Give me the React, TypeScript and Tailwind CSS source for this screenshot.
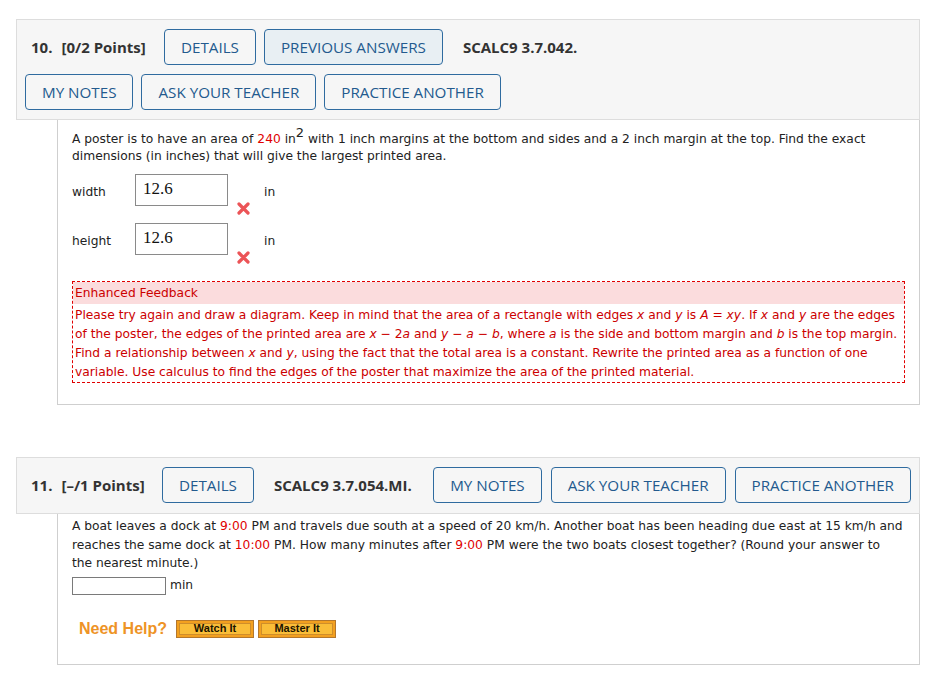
import React from "react";

const HEAD = { fontFamily: '"Open Sans", "Liberation Sans", sans-serif' };
const BODY = { fontFamily: '"DejaVu Sans", Verdana, sans-serif' };

function HeadButton({ label, active }: { label: string; active?: boolean }) {
  return (
    <button
      className={
        "h-[36px] px-[16px] pt-[2px] rounded-[4px] border border-[#2f6b9f] text-[15.2px] leading-none text-[#235a8e] uppercase " +
        (active ? "bg-[#e8eff3]" : "bg-transparent")
      }
    >
      {label}
    </button>
  );
}

function WrongMark() {
  return (
    <svg width="13" height="13" viewBox="0 0 13 13" className="block">
      <path d="M2 2 L11 11 M11 2 L2 11" stroke="#ec5457" strokeWidth="3.2" strokeLinecap="round" />
    </svg>
  );
}

function AnswerRow({ label, value }: { label: string; value: string }) {
  return (
    <div className="flex h-[32px] items-start">
      <span className="w-[63px] mt-[10px] leading-[17px]">{label}</span>
      <div
        className="w-[93px] h-[32px] border border-[#8a8a8a] px-[7px] pt-[3px] text-[17px] leading-[22px] text-[#111]"
        style={{ fontFamily: '"Liberation Serif", "Times New Roman", serif' }}
      >
        {value}
      </div>
      <span className="ml-[9px] mt-[28px]">
        <WrongMark />
      </span>
      <span className="ml-[14px] mt-[10px] leading-[17px]">in</span>
    </div>
  );
}

function HelpButton({ label }: { label: string }) {
  return (
    <span className="block w-[78px] h-[18px] border border-[#b3772d] bg-[#f3a01f] p-[2px]">
      <span
        className="flex h-full items-center justify-center border border-[#cf8d2a] bg-[#fabd38] text-[11px] font-bold text-[#1c1400]"
        style={{ fontFamily: '"Liberation Sans", Arial, sans-serif' }}
      >
        {label}
      </span>
    </span>
  );
}

export default function App() {
  return (
    <div className="min-h-[687px] bg-white pl-[16px] pr-[8px] pt-[19px] text-[12.28px] text-[#222]" style={BODY}>
      {/* Question 10 */}
      <div className="border border-[#dddddd] bg-[#f6f6f6] pt-[9px] pb-[9px]" style={HEAD}>
        <div className="flex items-center pl-[14px]">
          <span className="w-[133px] text-[15px] font-bold text-[#333]">
            <span className="mr-[9px]">10.</span>[0/2 Points]
          </span>
          <div className="flex gap-[8px]">
            <HeadButton label="Details" />
            <HeadButton label="Previous Answers" active />
          </div>
          <span className="ml-[20px] text-[15px] font-bold text-[#333]">SCALC9 3.7.042.</span>
        </div>
        <div className="mt-[9px] flex gap-[8px] pl-[8px]">
          <HeadButton label="My Notes" />
          <HeadButton label="Ask Your Teacher" />
          <HeadButton label="Practice Another" />
        </div>
      </div>
      <div className="ml-[41px] border-x border-b border-[#cfcfcf] pl-[14px] pr-[14px] pt-[11px] pb-[21px]">
        <p className="leading-[17px]">
          A poster is to have an area of <span className="text-[#e00000]">240</span> in
          <sup className="text-[13px]">2</sup> with 1 inch margins at the bottom and sides and a 2 inch margin at
          the top. Find the exact dimensions (in inches) that will give the largest printed area.
        </p>
        <div className="mt-[9px] flex flex-col gap-[17px]">
          <AnswerRow label="width" value="12.6" />
          <AnswerRow label="height" value="12.6" />
        </div>
        <div className="mt-[26px] border border-dashed border-[#e00000] text-[#cc0000]">
          <div className="bg-[#fbdcdd] px-[2px] pt-[1px] leading-[21px]">Enhanced Feedback</div>
          <p className="px-[2px] pt-[2px] leading-[19px]">
            Please try again and draw a diagram. Keep in mind that the area of a rectangle with edges <i>x</i> and{" "}
            <i>y</i> is <i>A</i> = <i>xy</i>. If <i>x</i> and <i>y</i> are the edges of the poster, the edges of the
            printed area are <i>x</i> − 2<i>a</i> and <i>y</i> − <i>a</i> − <i>b</i>, where <i>a</i> is the side and
            bottom margin and <i>b</i> is the top margin. Find a relationship between <i>x</i> and <i>y</i>, using the
            fact that the total area is a constant. Rewrite the printed area as a function of one variable. Use
            calculus to find the edges of the poster that maximize the area of the printed material.
          </p>
        </div>
      </div>

      {/* Question 11 */}
      <div className="mt-[52px] border border-[#dddddd] bg-[#f6f6f6] pt-[9px] pb-[10px]" style={HEAD}>
        <div className="flex items-center pl-[14px]">
          <span className="w-[131px] text-[15px] font-bold text-[#333]">
            <span className="mr-[9px]">11.</span>[–/1 Points]
          </span>
          <HeadButton label="Details" />
          <span className="ml-[20px] mr-auto text-[15px] font-bold text-[#333]">SCALC9 3.7.054.MI.</span>
          <div className="flex gap-[9px] pr-[8px]">
            <HeadButton label="My Notes" />
            <HeadButton label="Ask Your Teacher" />
            <HeadButton label="Practice Another" />
          </div>
        </div>
      </div>
      <div className="ml-[41px] border-x border-b border-[#cfcfcf] pl-[14px] pr-[8px] pt-[3px] pb-[26px]">
        <p className="leading-[18.5px]">
          A boat leaves a dock at <span className="text-[#e00000]">9:00</span> PM and travels due south at a speed
          of 20 km/h. Another boat has been heading due east at 15 km/h and
          <br />
          reaches the same dock at <span className="text-[#e00000]">10:00</span> PM. How many minutes after{" "}
          <span className="text-[#e00000]">9:00</span> PM were the two boats closest together? (Round your answer to
          <br />
          the nearest minute.)
        </p>
        <div className="mt-[4px] flex items-center">
          <div className="w-[94px] h-[18px] border border-[#7a7a7a]" />
          <span className="ml-[4px] leading-[17px]">min</span>
        </div>
        <div className="mt-[25px] ml-[7px] flex items-center">
          <span
            className="mr-[9px] text-[16px] leading-[18px] font-bold text-[#ee9326]"
            style={{ fontFamily: '"Liberation Sans", Arial, sans-serif' }}
          >
            Need Help?
          </span>
          <HelpButton label="Watch It" />
          <span className="ml-[4px]">
            <HelpButton label="Master It" />
          </span>
        </div>
      </div>
    </div>
  );
}
